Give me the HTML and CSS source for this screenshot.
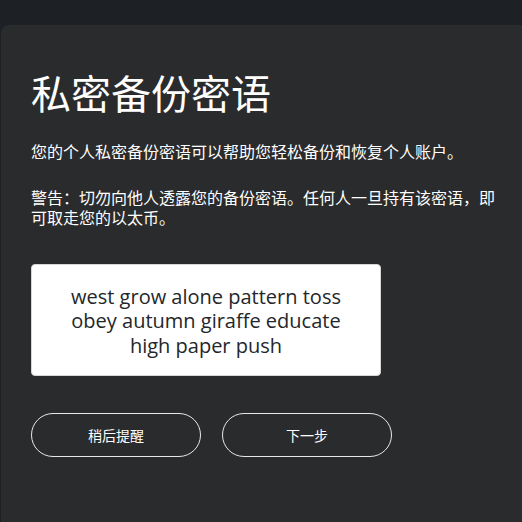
FILE: index.html
```html
<!DOCTYPE html>
<html lang="zh-CN">
<head>
<meta charset="utf-8">
<link rel="stylesheet" href="styles.css">
</head>
<body>
<div class="topbar"></div>
<main class="card">
  <h1 class="title">私密备份密语</h1>
  <p class="text intro">您的个人私密备份密语可以帮助您轻松备份和恢复个人账户。</p>
  <p class="text warn">警告：切勿向他人透露您的备份密语。任何人一旦持有该密语，即可取走您的以太币。</p>
  <div class="phrase">west grow alone pattern toss<br>obey autumn giraffe educate<br>high paper push</div>
  <div class="actions">
    <button class="btn">稍后提醒</button>
    <button class="btn">下一步</button>
  </div>
</main>
</body>
</html>
```

FILE: styles.css
```css
html, body {
  margin: 0;
  padding: 0;
  background: #1d2024;
  height: 100%;
  overflow: hidden;
}
body {
  font-family: "Noto Sans CJK SC", "Noto Sans", sans-serif;
  color: #ffffff;
}
.topbar {
  height: 25px;
  background: #1d2024;
}
.card {
  margin-left: 1px;
  background: #2a2b2d;
  border-top-left-radius: 8px;
  height: 497px;
  padding: 0 26px 0 30px;
  box-sizing: border-box;
  width: 521px;
  display: flex;
  flex-direction: column;
}
.title {
  margin: 39px 0 0 0;
  font-size: 40px;
  font-weight: 400;
  line-height: 56px;
}
.text {
  margin: 0;
  font-size: 16px;
  line-height: 20px;
}
.intro {
  margin-top: 21px;
}
.warn {
  margin-top: 26px;
}
.phrase {
  margin-top: 37px;
  width: 350px;
  height: 112px;
  box-sizing: border-box;
  background: #ffffff;
  border: 1px solid #d6d6d6;
  border-radius: 4px;
  color: #24272a;
  font-family: "Open Sans", Lato, sans-serif;
  font-size: 20px;
  line-height: 24.5px;
  text-align: center;
  padding: 3px 10px 0;
  display: flex;
  align-items: center;
  justify-content: center;
  white-space: nowrap;
}
.actions {
  margin-top: 37px;
  display: flex;
  gap: 21px;
}
.btn {
  width: 170px;
  height: 44px;
  box-sizing: border-box;
  border: 1px solid #e8e8e8;
  border-radius: 22px;
  background: transparent;
  color: #ffffff;
  font-family: "Noto Sans CJK SC", sans-serif;
  font-size: 14px;
  padding: 0;
}
```
